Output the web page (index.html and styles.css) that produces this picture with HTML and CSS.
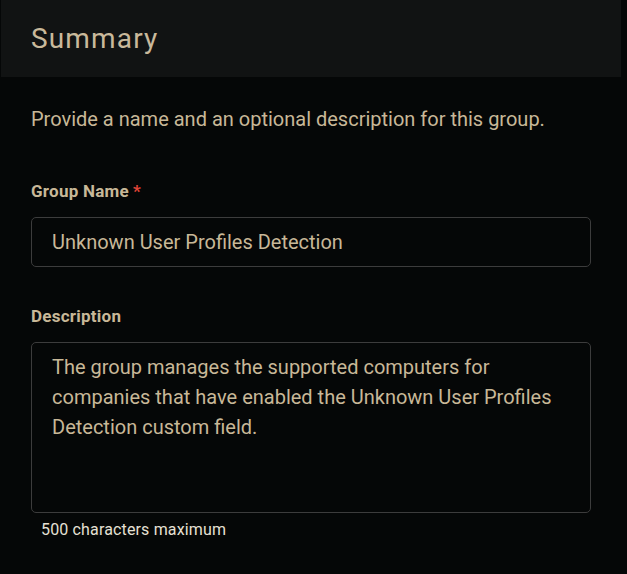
FILE: index.html
```html
<!DOCTYPE html>
<html lang="en">
<head>
<meta charset="utf-8">
<title>Summary</title>
<link rel="stylesheet" href="styles.css">
</head>
<body>
<div class="page">
  <header class="header">
    <h1 class="title">Summary</h1>
  </header>
  <main class="content">
    <p class="intro">Provide a name and an optional description for this group.</p>
    <div class="field">
      <label class="label">Group Name<span class="req">*</span></label>
      <div class="input">Unknown User Profiles Detection</div>
    </div>
    <div class="field field-desc">
      <label class="label">Description</label>
      <div class="textarea">The group manages the supported computers for companies that have enabled the Unknown User Profiles Detection custom field.</div>
      <div class="hint">500 characters maximum</div>
    </div>
  </main>
</div>
</body>
</html>
```

FILE: styles.css
```css
html, body {
  margin: 0;
  padding: 0;
  background: #050707;
}
body {
  font-family: Roboto, "Noto Sans", "Liberation Sans", sans-serif;
  color: #c8b898;
  width: 627px;
  height: 574px;
  overflow: hidden;
}
.header {
  margin-left: 1px;
  width: 620px;
  height: 77px;
  box-sizing: border-box;
  background: #111313;
  padding: 22px 0 0 30px;
}
.title {
  margin: 0;
  font-size: 28px;
  font-weight: 400;
  line-height: normal;
  letter-spacing: 1.15px;
  color: #c9b99b;
}
.content {
  padding: 30px 36px 0 31px;
}
.intro {
  margin: 0;
  font-size: 20px;
  line-height: 24px;
}
.field {
  margin-top: 50px;
  display: flex;
  flex-direction: column;
}
.field-desc {
  margin-top: 39px;
}
.label {
  font-size: 17px;
  font-weight: 700;
  line-height: 20px;
  letter-spacing: 0.25px;
  margin-bottom: 16px;
}
.req {
  color: #e04438;
  margin-left: 4px;
}
.input {
  width: 560px;
  height: 50px;
  box-sizing: border-box;
  border: 1px solid #3c3c3c;
  border-radius: 5px;
  padding: 0 20px;
  font-size: 20px;
  line-height: 48px;
}
.textarea {
  width: 560px;
  height: 171px;
  box-sizing: border-box;
  border: 1px solid #3c3c3c;
  border-radius: 5px;
  padding: 9px 20px;
  font-size: 20px;
  line-height: 30px;
}
.hint {
  margin-top: 8px;
  padding-left: 10px;
  font-size: 16px;
  line-height: 18px;
  letter-spacing: 0.15px;
  color: #e6e0d4;
}
```
